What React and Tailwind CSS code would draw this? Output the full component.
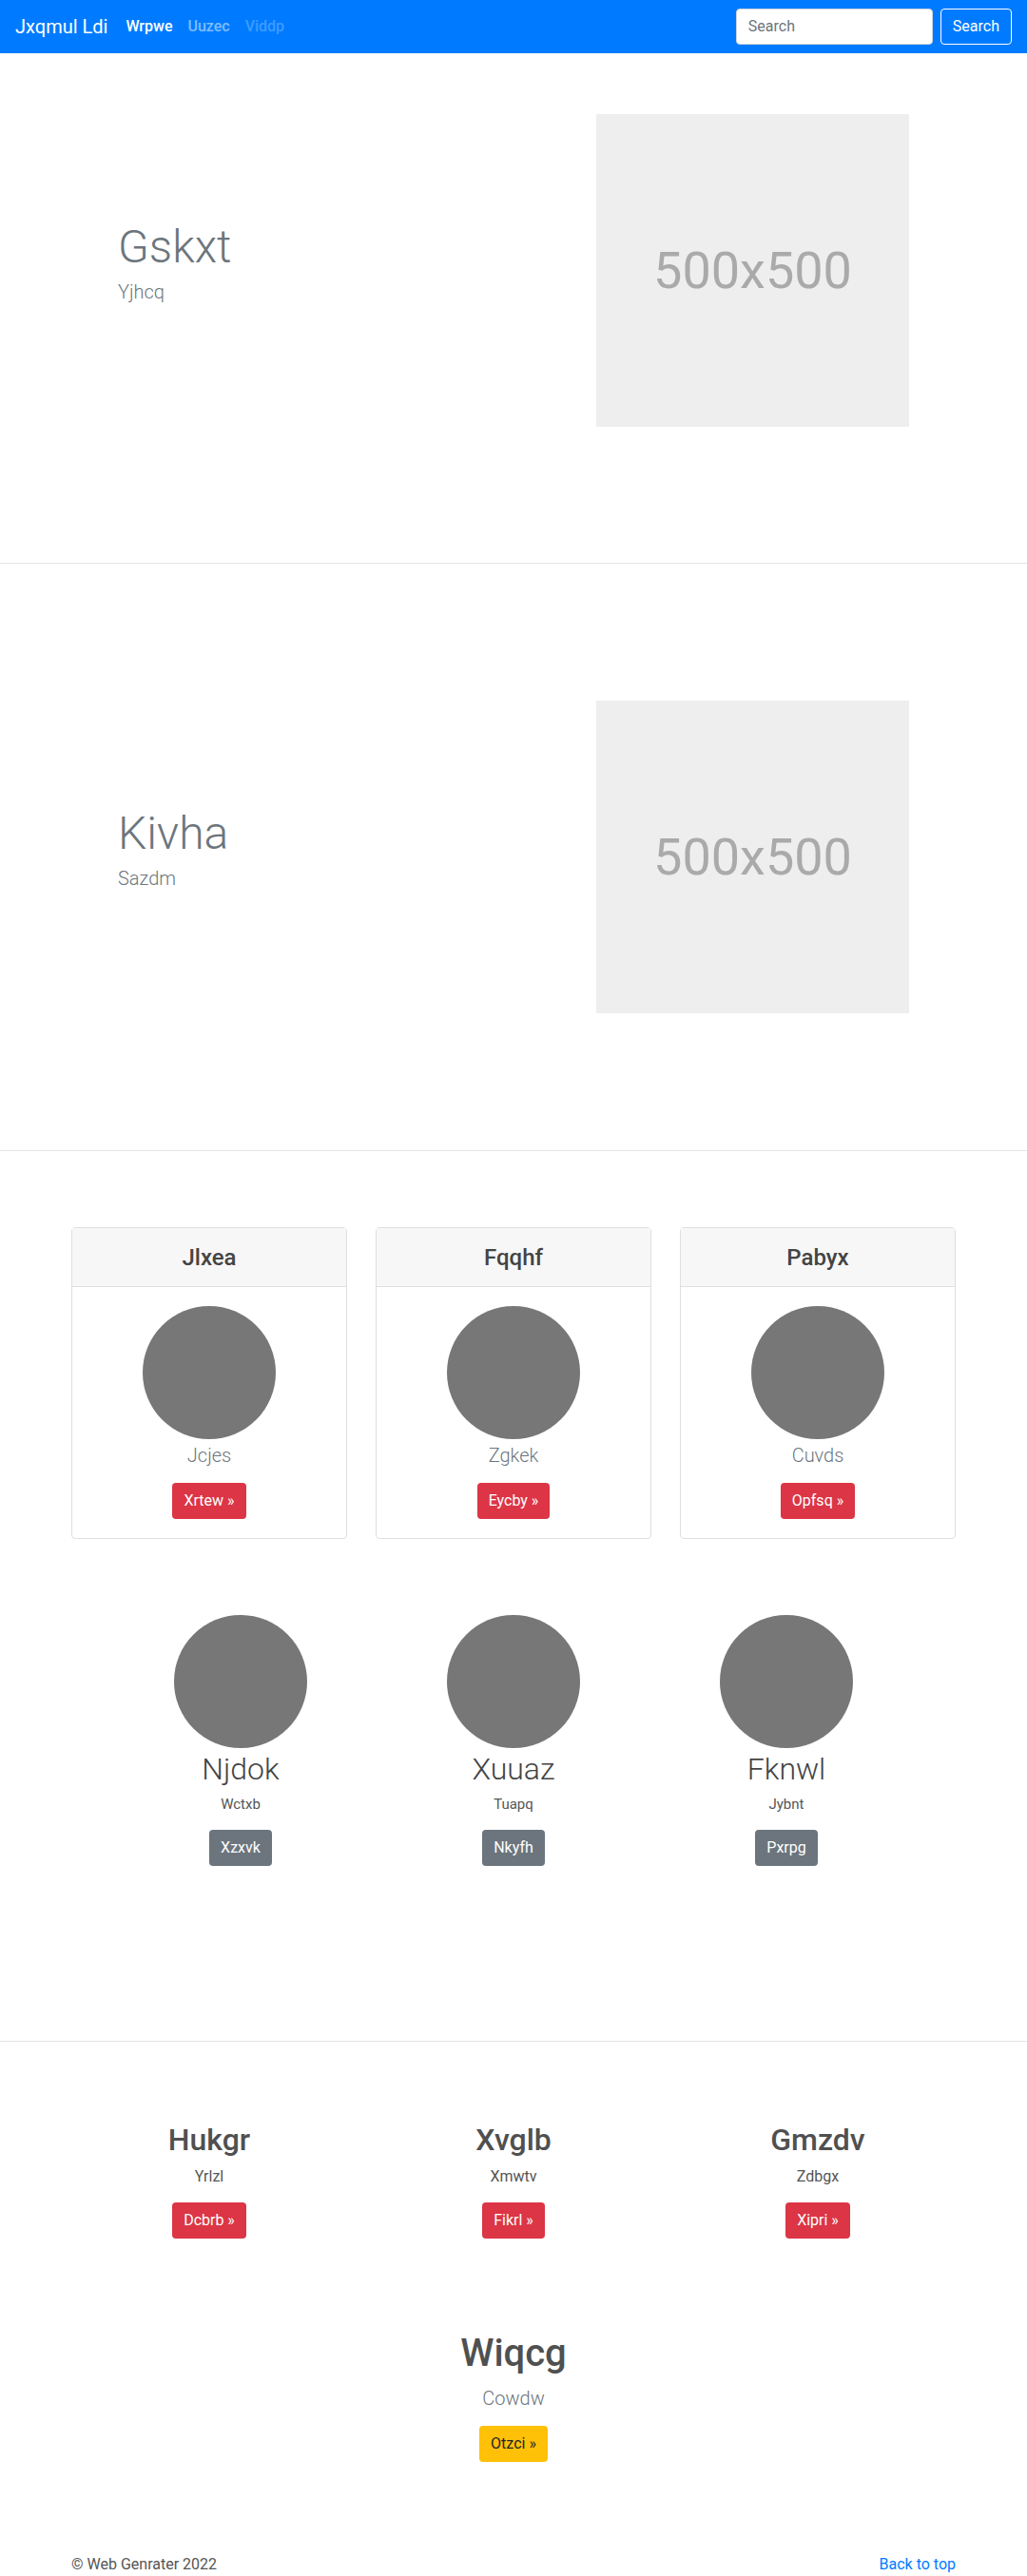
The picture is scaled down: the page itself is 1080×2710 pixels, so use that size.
const font = { fontFamily: 'Roboto, "Liberation Sans", sans-serif' }

const Circle = () => <div className="w-[140px] h-[140px] rounded-full bg-[#777777] mx-auto" />

const Btn = ({ children, color }) => (
  <span className={`inline-flex items-center h-[38px] px-3 rounded text-[16px] ${color}`}>{children}</span>
)

const Hero = ({ title, sub, titleSize, pad }) => (
  <section className={`border-b border-[#e5e5e5] ${pad}`}>
    <div className="grid grid-cols-2 items-center">
      <div className="pl-[124px]">
        <h1 className={`${titleSize} font-light text-[#6c757d] leading-[1.2]`}>{title}</h1>
        <p className="text-[20px] font-light text-[#6c757d] mt-1 mb-4">{sub}</p>
      </div>
      <div className="pl-[87px]">
        <div className="w-[329px] h-[329px] bg-[#eeeeee] flex items-center justify-center">
          <span className="text-[54px] text-[#aaaaaa]">500x500</span>
        </div>
      </div>
    </div>
  </section>
)

export default function App() {
  const cards = [
    { head: 'Jlxea', sub: 'Jcjes', btn: 'Xrtew »' },
    { head: 'Fqqhf', sub: 'Zgkek', btn: 'Eycby »' },
    { head: 'Pabyx', sub: 'Cuvds', btn: 'Opfsq »' },
  ]
  const people = [
    { name: 'Njdok', sub: 'Wctxb', btn: 'Xzxvk' },
    { name: 'Xuuaz', sub: 'Tuapq', btn: 'Nkyfh' },
    { name: 'Fknwl', sub: 'Jybnt', btn: 'Pxrpg' },
  ]
  const feats = [
    { name: 'Hukgr', sub: 'Yrlzl', btn: 'Dcbrb »' },
    { name: 'Xvglb', sub: 'Xmwtv', btn: 'Fikrl »' },
    { name: 'Gmzdv', sub: 'Zdbgx', btn: 'Xipri »' },
  ]

  return (
    <div style={font} className="w-[1080px] bg-white text-[#212529]">
      <nav className="h-14 bg-[#007bff] px-4 flex items-center">
        <span className="text-[20px] text-white mr-[11px]">Jxqmul Ldi</span>
        <div className="flex text-[16px] font-medium">
          <span className="px-2 text-white">Wrpwe</span>
          <span className="px-2 text-white/50">Uuzec</span>
          <span className="px-2 text-white/25">Viddp</span>
        </div>
        <div className="ml-auto flex items-center">
          <div className="w-[207px] h-[38px] bg-white rounded border border-[#ced4da] px-3 flex items-center text-[16px] text-[#6c757d] mr-2">Search</div>
          <div className="h-[38px] px-3 rounded border border-white text-white text-[16px] flex items-center">Search</div>
        </div>
      </nav>

      <Hero title="Gskxt" sub="Yjhcq" titleSize="text-[48px]" pad="pt-[64px] pb-[143px]" />
      <Hero title="Kivha" sub="Sazdm" titleSize="text-[48px]" pad="pt-[144px] pb-[144px]" />

      <section className="border-b border-[#e5e5e5] pt-[80px] pb-[184px]">
        <div className="w-[930px] mx-auto grid grid-cols-3 gap-[30px]">
          {cards.map(c => (
            <div key={c.head} className="border border-[#dfdfdf] rounded text-center">
              <div className="h-[62px] bg-[#f7f7f7] border-b border-[#dfdfdf] flex items-center justify-center text-[24px] font-medium text-[#444]">{c.head}</div>
              <div className="p-5">
                <Circle />
                <p className="text-[20px] font-light text-[#6c757d] leading-[30px] mt-0.5 mb-[14px]">{c.sub}</p>
                <Btn color="bg-[#dc3545] text-white">{c.btn}</Btn>
              </div>
            </div>
          ))}
        </div>
        <div className="w-[861px] mx-auto grid grid-cols-3 mt-[80px]">
          {people.map(p => (
            <div key={p.name} className="text-center">
              <Circle />
              <h2 className="text-[32px] font-light text-[#444] leading-[38px] mt-[3px]">{p.name}</h2>
              <p className="text-[15px] text-[#555] leading-6 mt-1.5 mb-[15px]">{p.sub}</p>
              <Btn color="bg-[#6c757d] text-white">{p.btn}</Btn>
            </div>
          ))}
        </div>
      </section>

      <section className="pt-[84px]">
        <div className="w-[960px] mx-auto grid grid-cols-3">
          {feats.map(f => (
            <div key={f.name} className="text-center">
              <h2 className="text-[32px] font-medium text-[#505050] leading-[38px]">{f.name}</h2>
              <p className="text-[16px] text-[#555] leading-6 mt-2 mb-[15px]">{f.sub}</p>
              <Btn color="bg-[#dc3545] text-white">{f.btn}</Btn>
            </div>
          ))}
        </div>
        <div className="text-center mt-[97px]">
          <h1 className="text-[40px] font-medium text-[#505050] leading-[48px]">Wiqcg</h1>
          <p className="text-[20px] font-light text-[#6c757d] leading-[30px] mt-2 mb-[14px]">Cowdw</p>
          <Btn color="bg-[#ffc107] text-[#212529]">Otzci »</Btn>
        </div>
      </section>

      <footer className="w-[930px] mx-auto mt-[96px] flex justify-between text-[16px] leading-6">
        <span className="text-[#555]">© Web Genrater 2022</span>
        <span className="text-[#007bff]">Back to top</span>
      </footer>
    </div>
  )
}
